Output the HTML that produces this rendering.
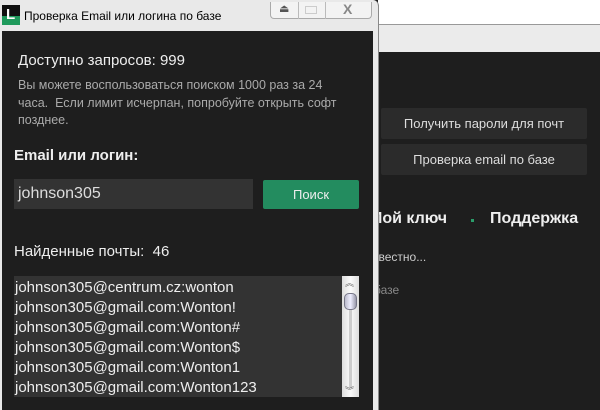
<!DOCTYPE html>
<html><head><meta charset="utf-8"><style>
*{margin:0;padding:0;box-sizing:border-box}
body{width:600px;height:410px;overflow:hidden;background:#1e1e1e;font-family:"Liberation Sans","DejaVu Sans",sans-serif;position:relative}
.a{position:absolute;white-space:nowrap}
</style></head><body>
<div class="a" style="left:378px;top:0;width:222px;height:24px;background:#fff"></div>
<div class="a" style="left:378px;top:24px;width:222px;height:28px;background:#ebebeb;border-top:1px solid #999"></div>
<div class="a" style="left:381px;top:108px;width:206px;height:31px;background:#2b2b2b;border-radius:2px;color:#ddd;font-size:13px;text-align:center;line-height:31px">Получить пароли для почт</div>
<div class="a" style="left:381px;top:144px;width:206px;height:31px;background:#2b2b2b;border-radius:2px;color:#ddd;font-size:13px;text-align:center;line-height:31px">Проверка email по базе</div>
<div class="a" style="left:369px;top:210px;color:#eee;font-size:16px;font-weight:bold">Мой ключ</div>
<div class="a" style="left:471px;top:219px;width:3px;height:3px;background:#2a9d6a"></div>
<div class="a" style="left:490px;top:210px;color:#eee;font-size:16px;font-weight:bold">Поддержка</div>
<div class="a" style="left:373px;top:250px;color:#ccc;font-size:12px">звестно...</div>
<div class="a" style="left:374px;top:283px;color:#888;font-size:12px">базе</div>
<div class="a" style="left:0;top:0;width:379px;height:410px;background:#e9e9e9;border-radius:0 6px 0 0;border-right:1px solid #888"></div>
<div class="a" style="left:2px;top:5px;width:18px;height:20px;background:#111"></div>
<div class="a" style="left:2px;top:16px;width:18px;height:9px;background:#1f9a5c"></div>
<div class="a" style="left:6px;top:6px;color:#fff;font-size:15px;font-weight:bold;line-height:18px">L</div>
<div class="a" style="left:24px;top:9px;color:#000;font-size:12px">Проверка Email или логина по базе</div>
<div class="a" style="left:270px;top:2px;width:102px;height:17px;border:1px solid #aaa;border-top:none;border-radius:0 0 4px 4px;background:#f3f3f3"></div>
<div class="a" style="left:298px;top:2px;width:1px;height:17px;background:#bbb"></div>
<div class="a" style="left:325px;top:2px;width:1px;height:17px;background:#bbb"></div>
<div class="a" style="left:279px;top:2px;color:#555;font-size:11px">⏏</div>
<div class="a" style="left:305px;top:6px;width:12px;height:8px;border:1px solid #ccc"></div>
<div class="a" style="left:343px;top:1px;color:#888;font-size:14px;font-weight:bold">X</div>
<div class="a" style="left:2px;top:31px;width:371px;height:379px;background:#1e1e1e"></div>
<div class="a" style="left:18px;top:52px;color:#eee;font-size:15px">Доступно запросов: 999</div>
<div class="a" style="left:18px;top:77px;color:#aaa;font-size:12.5px;line-height:17.5px;white-space:normal;width:330px">Вы можете воспользоваться поиском 1000 раз за 24 часа.&nbsp; Если лимит исчерпан, попробуйте открыть софт позднее.</div>
<div class="a" style="left:14px;top:147px;color:#eee;font-size:15px;font-weight:bold">Email или логин:</div>
<div class="a" style="left:14px;top:179px;width:239px;height:30px;background:#333;color:#ddd;font-size:16px;line-height:30px;padding-left:4px">johnson305</div>
<div class="a" style="left:263px;top:180px;width:96px;height:29px;background:#238c5f;border-radius:2px;color:#eee;font-size:13px;text-align:center;line-height:29px">Поиск</div>
<div class="a" style="left:14px;top:243px;color:#eee;font-size:15px">Найденные почты:&nbsp; 46</div>
<div class="a" style="left:14px;top:276px;width:345px;height:121px;background:#333;overflow:hidden">
<div style="color:#eee;font-size:15px;line-height:20px;padding:2px 0 0 1px">johnson305@centrum.cz:wonton<br>johnson305@gmail.com:Wonton!<br>johnson305@gmail.com:Wonton#<br>johnson305@gmail.com:Wonton$<br>johnson305@gmail.com:Wonton1<br>johnson305@gmail.com:Wonton123</div>
<div style="position:absolute;left:328px;top:0;width:17px;height:121px;background:linear-gradient(90deg,#ddd,#fafafa,#ddd)"></div>
<div style="position:absolute;left:335px;top:22px;width:3px;height:90px;background:#ccc"></div>
<div style="position:absolute;left:330px;top:17px;width:13px;height:17px;border:1px solid #778;border-radius:5px;background:linear-gradient(90deg,#bbc,#eef,#99a)"></div>
<div style="position:absolute;left:331px;top:0;font-size:9px;color:#666">︽</div>
<div style="position:absolute;left:331px;top:108px;font-size:9px;color:#666">︾</div>
</div>
</body></html>
